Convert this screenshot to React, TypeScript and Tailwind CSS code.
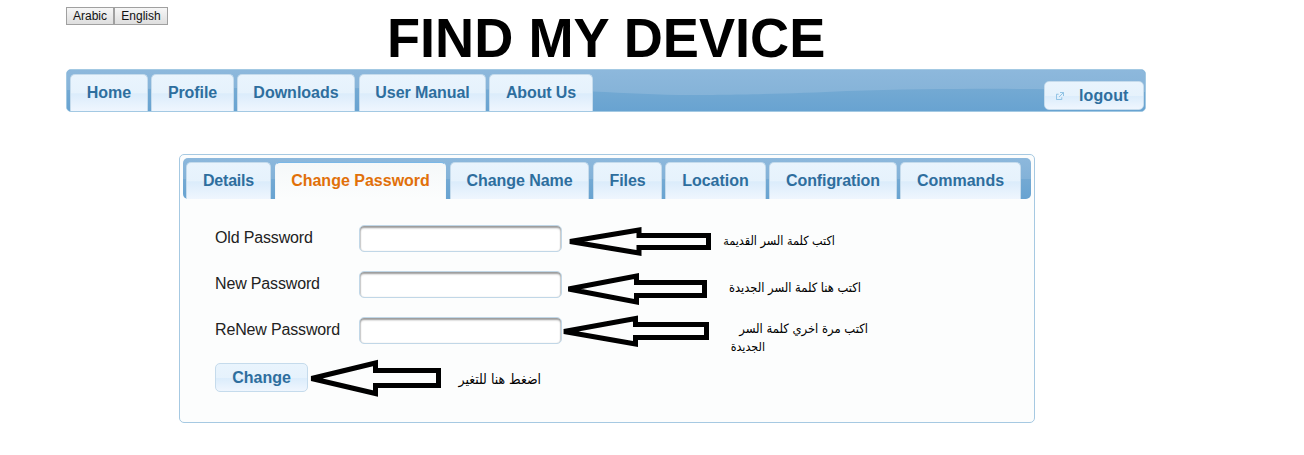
import React from "react";

const glossy =
  "border border-[#c5dbec] bg-[linear-gradient(180deg,#e9f4fd_0%,#e6f2fc_50%,#dbecfb_52%,#eff6fe_100%)]";
const tabBase = "flex shrink-0 justify-center rounded-t-[5px] border-b-0 text-[16px] leading-[18px] font-bold whitespace-nowrap pt-[9px]";

const navItems = [
  { label: "Home", box: "ml-[3px] w-[78px]" },
  { label: "Profile", box: "ml-[3px] w-[83px] tracking-[-0.08px]" },
  { label: "Downloads", box: "ml-[3px] w-[118px]" },
  { label: "User Manual", box: "ml-[4px] w-[127px] tracking-[-0.08px]" },
  { label: "About Us", box: "ml-[3px] w-[104px] tracking-[-0.12px]" },
];

const tabs = [
  { label: "Details", box: "ml-[3px] w-[85px] tracking-[-0.2px]" },
  { label: "Change Password", box: "ml-[4px] w-[171px]", active: true },
  { label: "Change Name", box: "ml-[4px] w-[139px] tracking-[-0.05px]" },
  { label: "Files", box: "ml-[4px] w-[69px] tracking-[-0.1px]" },
  { label: "Location", box: "ml-[3px] w-[101px]" },
  { label: "Configration", box: "ml-[3px] w-[128px] tracking-[-0.1px]" },
  { label: "Commands", box: "ml-[3px] w-[121px]" },
];

const notes = [
  { text: "اكتب كلمة السر القديمة", place: "right-[469px] top-[232px] text-[12.5px]" },
  { text: "اكتب هنا كلمة السر الجديدة", place: "right-[443px] top-[279px] text-[12.8px]" },
  { text: "اكتب مرة اخري كلمة السر", place: "right-[436px] top-[320px] text-[12.9px]" },
  { text: "الجديدة", place: "right-[539px] top-[338px] text-[12.4px]" },
  { text: "اضغط هنا للتغير", place: "right-[763px] top-[370px] text-[13.9px]" },
];

const arrows = [
  "M570 241.5 L639 230 V235.5 H708.5 V247.5 H639 V253 Z",
  "M568.5 289 L636.5 276 V282.5 H704.5 V295.5 H636.5 V302 Z",
  "M564 331.5 L635.5 318.5 V324.5 H706.5 V337.5 H635.5 V344 Z",
  "M311.5 378.5 L375.5 363 V370.5 H438.5 V385.5 H375.5 V393.5 Z",
];

function Field({ label }: { label: string }) {
  return (
    <label className="flex h-[46px] items-start">
      <span className="w-[144px] pt-[4px] text-[16px] leading-[18px] tracking-[-0.16px] text-[#222]">{label}</span>
      <input
        type="password"
        className="h-[27px] w-[203px] rounded-[5px] border border-[#c1d7e7] bg-white px-2 shadow-[inset_0_2px_2px_#999,inset_1px_0_1px_#ddd,inset_-1px_0_1px_#ddd] outline-none"
      />
    </label>
  );
}

export default function App() {
  return (
    <div className="relative h-[455px] w-[1304px] overflow-hidden bg-white font-['Liberation_Sans',Arial,sans-serif]">
      <header className="ml-[66px] flex h-[69px] w-[1080px] items-start">
        <div className="mt-[7px] flex w-[322px] text-[12px] leading-[14px] text-[#111]">
          <button className="h-[18px] w-[48px] border border-[#a0a0a0] bg-linear-to-b from-[#f6f6f6] to-[#dedede]">Arabic</button>
          <button className="h-[18px] w-[54px] border border-[#a0a0a0] bg-linear-to-b from-[#f6f6f6] to-[#dedede]">English</button>
        </div>
        <h1 className="mt-[6px] -ml-[1px] origin-left scale-x-[0.967] text-[56px] leading-[64px] font-bold whitespace-nowrap text-black">FIND MY DEVICE</h1>
      </header>

      <nav className="relative ml-[66px] flex h-[43px] w-[1080px] overflow-hidden rounded-[5px] border border-[#a3c9e3] bg-[#6ca5d1]">
        <svg className="absolute inset-0" width="1078" height="41" aria-hidden="true">
          <defs>
            <linearGradient id="navBase" x1="0" y1="0" x2="0" y2="1">
              <stop offset="0.4" stopColor="#75aad3" />
              <stop offset="1" stopColor="#68a3d1" />
            </linearGradient>
            <linearGradient id="navShine" x1="0" y1="0" x2="0" y2="1">
              <stop offset="0" stopColor="#8db8dc" />
              <stop offset="1" stopColor="#85b3d8" />
            </linearGradient>
          </defs>
          <rect width="1078" height="41" fill="url(#navBase)" />
          <path d="M0 0H1078V22C1000 18 880 18 780 21C720 24 650 25 626 25C590 25 560 23 526 21.5C350 17 150 17 0 20Z" fill="url(#navShine)" />
        </svg>
        <div className="relative mt-[4px] flex">
          {navItems.map((item) => (
            <a key={item.label} className={`${tabBase} ${glossy} text-[#2e6e9e] ${item.box}`}>{item.label}</a>
          ))}
        </div>
        <button className={`relative mt-[11px] mr-[1px] ml-auto flex h-[29px] w-[100px] items-center rounded-[5px] pl-[11px] text-[16px] font-bold text-[#2e6e9e] ${glossy}`}>
          <svg width="8" height="8" viewBox="0 0 9 9" fill="none" stroke="#83bbe0" aria-hidden="true">
            <path d="M3 2.5H.5V8.5H6.5V6M4.5 .5H8.5V4.5M8 1L3.5 5.5" />
          </svg>
          <span className="ml-[15px] tracking-[0.1px]">logout</span>
        </button>
      </nav>

      <main className="mt-[42px] ml-[179px] h-[269px] w-[856px] rounded-[5px] border border-[#a6c9e2] bg-[#fcfdfd] p-[3px]">
        <div className="flex h-[41px] rounded-[5px] bg-[linear-gradient(180deg,#8db8dc_0%,#83b2d8_50%,#73a9d3_52%,#68a3d1_100%)] pt-[4px]">
          {tabs.map((tab) => (
            <a
              key={tab.label}
              className={`${tabBase} ${tab.box} ${
                tab.active
                  ? "border border-x-[#f3f8fa] border-t-[#79b7e7] bg-linear-to-b from-[#f5f8f9] to-[#fcfdfd] text-[#e17009]"
                  : `${glossy} text-[#2e6e9e]`
              }`}
            >
              {tab.label}
            </a>
          ))}
        </div>
        <form className="pt-[26px] pl-[32px]" onSubmit={(event) => event.preventDefault()}>
          <Field label="Old Password" />
          <Field label="New Password" />
          <Field label="ReNew Password" />
          <button className={`h-[29px] w-[93px] rounded-[5px] text-[16px] leading-[18px] font-bold text-[#2e6e9e] ${glossy}`}>Change</button>
        </form>
      </main>

      <svg className="pointer-events-none absolute inset-0" width="1304" height="455" fill="none" stroke="#000" strokeWidth="5" strokeLinejoin="miter" strokeMiterlimit="3" aria-hidden="true">
        {arrows.map((d) => (
          <path key={d} d={d} />
        ))}
      </svg>
      {notes.map((note) => (
        <p key={note.text} dir="rtl" className={`absolute font-['DejaVu_Sans_Condensed','DejaVu_Sans',sans-serif] leading-[18px] whitespace-nowrap text-black ${note.place}`}>
          {note.text}
        </p>
      ))}
    </div>
  );
}
